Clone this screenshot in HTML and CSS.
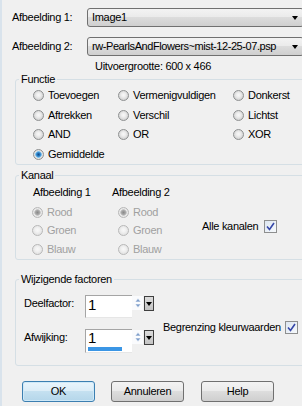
FILE: index.html
```html
<!DOCTYPE html>
<html>
<head>
<meta charset="utf-8">
<link rel="stylesheet" href="styles.css">
</head>
<body>
<div class="dialog">
  <div class="combo-row first">
    <span class="lbl">Afbeelding 1:</span>
    <div class="combo"><span class="combo-text">Image1</span><span class="arrow"></span></div>
  </div>
  <div class="combo-row second">
    <span class="lbl">Afbeelding 2:</span>
    <div class="combo"><span class="combo-text long">rw-PearlsAndFlowers~mist-12-25-07.psp</span><span class="arrow"></span></div>
  </div>
  <div class="outsize">Uitvoergrootte: 600 x 466</div>

  <div class="group g-func">
    <span class="gtitle">Functie</span>
    <div class="func-grid">
      <div class="opt"><span class="radio"></span>Toevoegen</div>
      <div class="opt"><span class="radio"></span>Vermenigvuldigen</div>
      <div class="opt"><span class="radio"></span>Donkerst</div>
      <div class="opt"><span class="radio"></span>Aftrekken</div>
      <div class="opt"><span class="radio"></span>Verschil</div>
      <div class="opt"><span class="radio"></span>Lichtst</div>
      <div class="opt"><span class="radio"></span>AND</div>
      <div class="opt"><span class="radio"></span>OR</div>
      <div class="opt"><span class="radio"></span>XOR</div>
      <div class="opt"><span class="radio on"></span>Gemiddelde</div>
    </div>
  </div>

  <div class="group g-kanaal">
    <span class="gtitle">Kanaal</span>
    <div class="kanaal">
      <div class="kcol c1">
        <div class="khead">Afbeelding 1</div>
        <div class="opt dis"><span class="radio on"></span>Rood</div>
        <div class="opt dis"><span class="radio"></span>Groen</div>
        <div class="opt dis"><span class="radio"></span>Blauw</div>
      </div>
      <div class="kcol c2">
        <div class="khead">Afbeelding 2</div>
        <div class="opt dis"><span class="radio on"></span>Rood</div>
        <div class="opt dis"><span class="radio"></span>Groen</div>
        <div class="opt dis"><span class="radio"></span>Blauw</div>
      </div>
      <div class="chk-item alle">
        <span>Alle kanalen</span>
        <span class="check"><svg width="11" height="11" viewBox="0 0 11 11"><polyline points="2,5.5 4.5,8.5 9,2" fill="none" stroke="#3446a8" stroke-width="1.6"/></svg></span>
      </div>
    </div>
  </div>

  <div class="group g-factor">
    <span class="gtitle">Wijzigende factoren</span>
    <div class="factors">
      <div class="spins">
        <div class="spin-row r1">
          <span class="spin-lbl">Deelfactor:</span>
          <div class="field"><span class="val">1</span></div>
          <span class="spinbtn"><svg width="10" height="14" viewBox="0 0 10 14"><path d="M2 6 L5 2.5 L8 6 Z" fill="#7f9fcc" stroke="#fff" stroke-width="0.6"/><path d="M2 8 L8 8 L5 11.5 Z" fill="#7f9fcc" stroke="#fff" stroke-width="0.6"/></svg></span>
          <span class="dd"><span class="ddarrow"></span></span>
        </div>
        <div class="spin-row r2">
          <span class="spin-lbl">Afwijking:</span>
          <div class="field"><span class="val">1</span><span class="bar"></span></div>
          <span class="spinbtn"><svg width="10" height="14" viewBox="0 0 10 14"><path d="M2 6 L5 2.5 L8 6 Z" fill="#7f9fcc" stroke="#fff" stroke-width="0.6"/><path d="M2 8 L8 8 L5 11.5 Z" fill="#7f9fcc" stroke="#fff" stroke-width="0.6"/></svg></span>
          <span class="dd"><span class="ddarrow"></span></span>
        </div>
      </div>
      <div class="chk-item clip">
        <span>Begrenzing kleurwaarden</span>
        <span class="check"><svg width="11" height="11" viewBox="0 0 11 11"><polyline points="2,5.5 4.5,8.5 9,2" fill="none" stroke="#3446a8" stroke-width="1.6"/></svg></span>
      </div>
    </div>
  </div>

  <div class="btns">
    <div class="btn default">OK</div>
    <div class="btn">Annuleren</div>
    <div class="btn help">Help</div>
  </div>
</div>
</body>
</html>
```

FILE: styles.css
```css
* { box-sizing: border-box; }
body { margin: 0; background: #f0f0f0; }

.dialog {
  width: 302px;
  height: 406px;
  overflow: hidden;
  background: #f0f0f0;
  border-left: 2px solid #d9e3ec;
  font-family: "Liberation Sans", Arial, sans-serif;
  font-size: 11px;
  line-height: 13px;
  color: #000;
  letter-spacing: -0.3px;
}

.combo-row { display: flex; align-items: center; height: 19px; padding-left: 10px; }
.combo-row.first { margin-top: 8px; }
.combo-row.second { margin-top: 10px; }
.lbl { width: 75px; flex: none; white-space: nowrap; }
.combo {
  flex: none;
  width: 217px;
  height: 19px;
  border: 1px solid #707070;
  border-radius: 3px;
  background: linear-gradient(#f3f3f3 0%, #ebebeb 45%, #dcdcdc 50%, #cfcfcf 100%);
  display: flex;
  align-items: center;
  padding-left: 4px;
  padding-right: 5px;
}
.combo-text { flex: 1; white-space: nowrap; overflow: hidden; }
.combo-text.long { letter-spacing: -0.42px; }
.arrow {
  flex: none;
  width: 0; height: 0;
  border-left: 3.5px solid transparent;
  border-right: 3.5px solid transparent;
  border-top: 4px solid #000;
}

.outsize { margin-top: 4px; padding-left: 93px; height: 13px; white-space: nowrap; }

.group {
  position: relative;
  margin-left: 13px;
  width: 300px;
  border: 1px solid #d5dfe5;
  border-radius: 3px;
}
.gtitle {
  position: absolute;
  top: -7px;
  left: 3px;
  padding: 0 2px;
  background: #f0f0f0;
  line-height: 13px;
  white-space: nowrap;
}

.g-func { margin-top: 6px; height: 86px; }
.func-grid {
  display: grid;
  grid-template-columns: 85px 115px auto;
  grid-auto-rows: 19.5px;
  padding-top: 6px;
  padding-left: 17px;
}

.opt { display: flex; align-items: center; gap: 4px; white-space: nowrap; }
.radio {
  flex: none;
  width: 11px;
  height: 11px;
  border-radius: 50%;
  border: 1px solid #8e9091;
  background: radial-gradient(circle at 50% 45%, #f8f8f8 0, #eeeeee 2px, #d2d2d2 5px);
}
.radio.on {
  background: radial-gradient(circle at 50% 50%, #0f4d8a 0, #2c7fc6 1.8px, #7cc2ee 3px, #e4e4e4 3.6px, #dcdcdc 5px);
}
.opt.dis { color: #a0a0a0; }
.opt.dis .radio {
  border-color: #b8b8b8;
  background: radial-gradient(circle at 50% 45%, #f8f8f8 0, #f2f2f2 2px, #e2e2e2 5px);
}
.opt.dis .radio.on {
  background: radial-gradient(circle at 50% 50%, #8a8a8a 0, #a6a6a6 2px, #c8c8c8 3px, #ececec 3.6px, #e0e0e0 5px);
}

.g-kanaal { margin-top: 10px; height: 85px; }
.kanaal { display: flex; padding-top: 10px; padding-left: 16px; }
.kcol .opt { height: 18.5px; }
.khead { height: 14px; margin-bottom: 3px; white-space: nowrap; }
.c1 { width: 80px; }
.c1 .khead { padding-left: 1px; }
.c2 { width: 90px; }
.c2 .opt { padding-left: 6px; }
.chk-item { display: flex; align-items: center; gap: 6px; white-space: nowrap; }
.alle { align-self: flex-start; margin-top: 33.5px; }
.check {
  flex: none;
  width: 13px;
  height: 13px;
  border: 1px solid #8e8f8f;
  background: linear-gradient(135deg, #dde6f1, #f6f9fc);
  display: flex;
  align-items: center;
  justify-content: center;
}

.g-factor { margin-top: 19px; height: 87px; }
.factors { display: flex; align-items: flex-start; padding-top: 15px; padding-left: 8px; }
.spin-row { display: flex; align-items: flex-start; }
.spin-row.r1 { height: 23px; }
.spin-row.r2 { height: 24px; margin-top: 11px; }
.spin-lbl { width: 61px; margin-top: 2px; white-space: nowrap; }
.field {
  width: 47px;
  height: 100%;
  background: #fff;
  border-top: 1px solid #a5a5a5;
  border-left: 1px solid #a5a5a5;
  border-bottom: 1px solid #e6e6e6;
  display: flex;
  flex-direction: column;
  padding: 0 1px 1px 2px;
}
.val { font-size: 15px; line-height: 15px; letter-spacing: 0; }
.r1 .val { margin-top: 1px; }
.bar { margin-top: auto; width: 34px; height: 4px; background: #3b96e5; }
.spinbtn { width: 11px; height: 14px; margin-top: 1px; display: flex; justify-content: center; background: #fafbfd; }
.dd {
  width: 10px;
  height: 15px;
  margin-top: 1px;
  margin-left: 1px;
  border: 1px solid #3f3f3f;
  background: linear-gradient(#dcdcdc, #c4c4c4);
  display: flex;
  align-items: center;
  justify-content: center;
}
.ddarrow {
  width: 0; height: 0;
  border-left: 3px solid transparent;
  border-right: 3px solid transparent;
  border-top: 4px solid #000;
}
.clip { margin-left: 9px; margin-top: 25.5px; gap: 4px; }

.btns { display: flex; margin-top: 15px; padding-left: 20px; gap: 16px; }
.btn {
  width: 73px;
  height: 21px;
  border: 1px solid #707070;
  border-radius: 3px;
  background: linear-gradient(#f3f3f3 0%, #ebebeb 45%, #dddddd 50%, #cfcfcf 100%);
  text-align: center;
  line-height: 19px;
  white-space: nowrap;
}
.btn.default {
  border-color: #3c7fb1;
  background: linear-gradient(#e9f5fc 0%, #dcedf7 45%, #c4e0f0 50%, #b4d6ea 100%);
  box-shadow: inset 0 0 0 1px #cfe9f8;
}
.btn.help { margin-left: 1px; }
```
